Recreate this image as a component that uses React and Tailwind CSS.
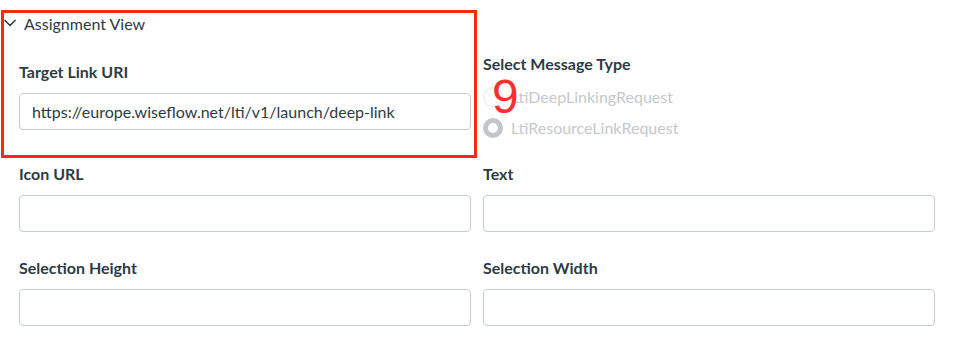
import { ChevronDown } from "lucide-react";

const font = { fontFamily: "Lato, 'Noto Sans', sans-serif" };

function Field({ label, value = "" }) {
  return (
    <div className="flex flex-col">
      <label className="text-[16px] leading-5 font-bold text-[#2d3b45]">{label}</label>
      <div className="mt-[11px] h-[37px] rounded-[4px] border border-[#c7cdd1] bg-white px-3 flex items-center text-[16px] text-[#2d3b45]">
        {value}
      </div>
    </div>
  );
}

function Radio({ label, checked }) {
  return (
    <div className="flex items-center h-5 gap-2">
      <span
        className={`w-5 h-5 rounded-full shrink-0 ${
          checked ? "border-[5px] border-[#c2c6c9]" : "border border-[#e4e6e8]"
        } bg-white`}
      />
      <span className="text-[16px] text-[#c5c9cc]">{label}</span>
    </div>
  );
}

export default function App() {
  return (
    <div className="relative w-[966px] h-[361px] bg-white overflow-hidden" style={font}>
      {/* header */}
      <div className="flex items-center h-5 mt-[14px] gap-1 text-[16px] text-[#2d3b45]">
        <ChevronDown size={20} strokeWidth={2} className="-mt-[2px]" />
        <span>Assignment View</span>
      </div>

      <div className="mt-5 pl-[19px] grid grid-cols-[452px_452px] gap-x-3 gap-y-[26px] items-start">
        <div className="pt-2">
          <Field label="Target Link URI" value="https://europe.wiseflow.net/lti/v1/launch/deep-link" />
        </div>
        <div className="flex flex-col">
          <div className="text-[16px] leading-5 font-bold text-[#2d3b45]">Select Message Type</div>
          <div className="mt-[13px] flex flex-col gap-[11px]">
            <Radio label="LtiDeepLinkingRequest" />
            <Radio label="LtiResourceLinkRequest" checked />
          </div>
        </div>
        <Field label="Icon URL" />
        <Field label="Text" />
        <Field label="Selection Height" />
        <Field label="Selection Width" />
      </div>

      {/* annotation overlay */}
      <div className="absolute left-[1px] top-[10px] w-[476px] h-[148px] border-[3px] border-[#fa2a12] pointer-events-none" />
      <div
        className="absolute left-[492px] top-[71px] text-[48px] leading-[52px] text-[#fa3030]"
        style={{ fontFamily: "'Liberation Sans', Arial, sans-serif" }}
      >
        9
      </div>
    </div>
  );
}
